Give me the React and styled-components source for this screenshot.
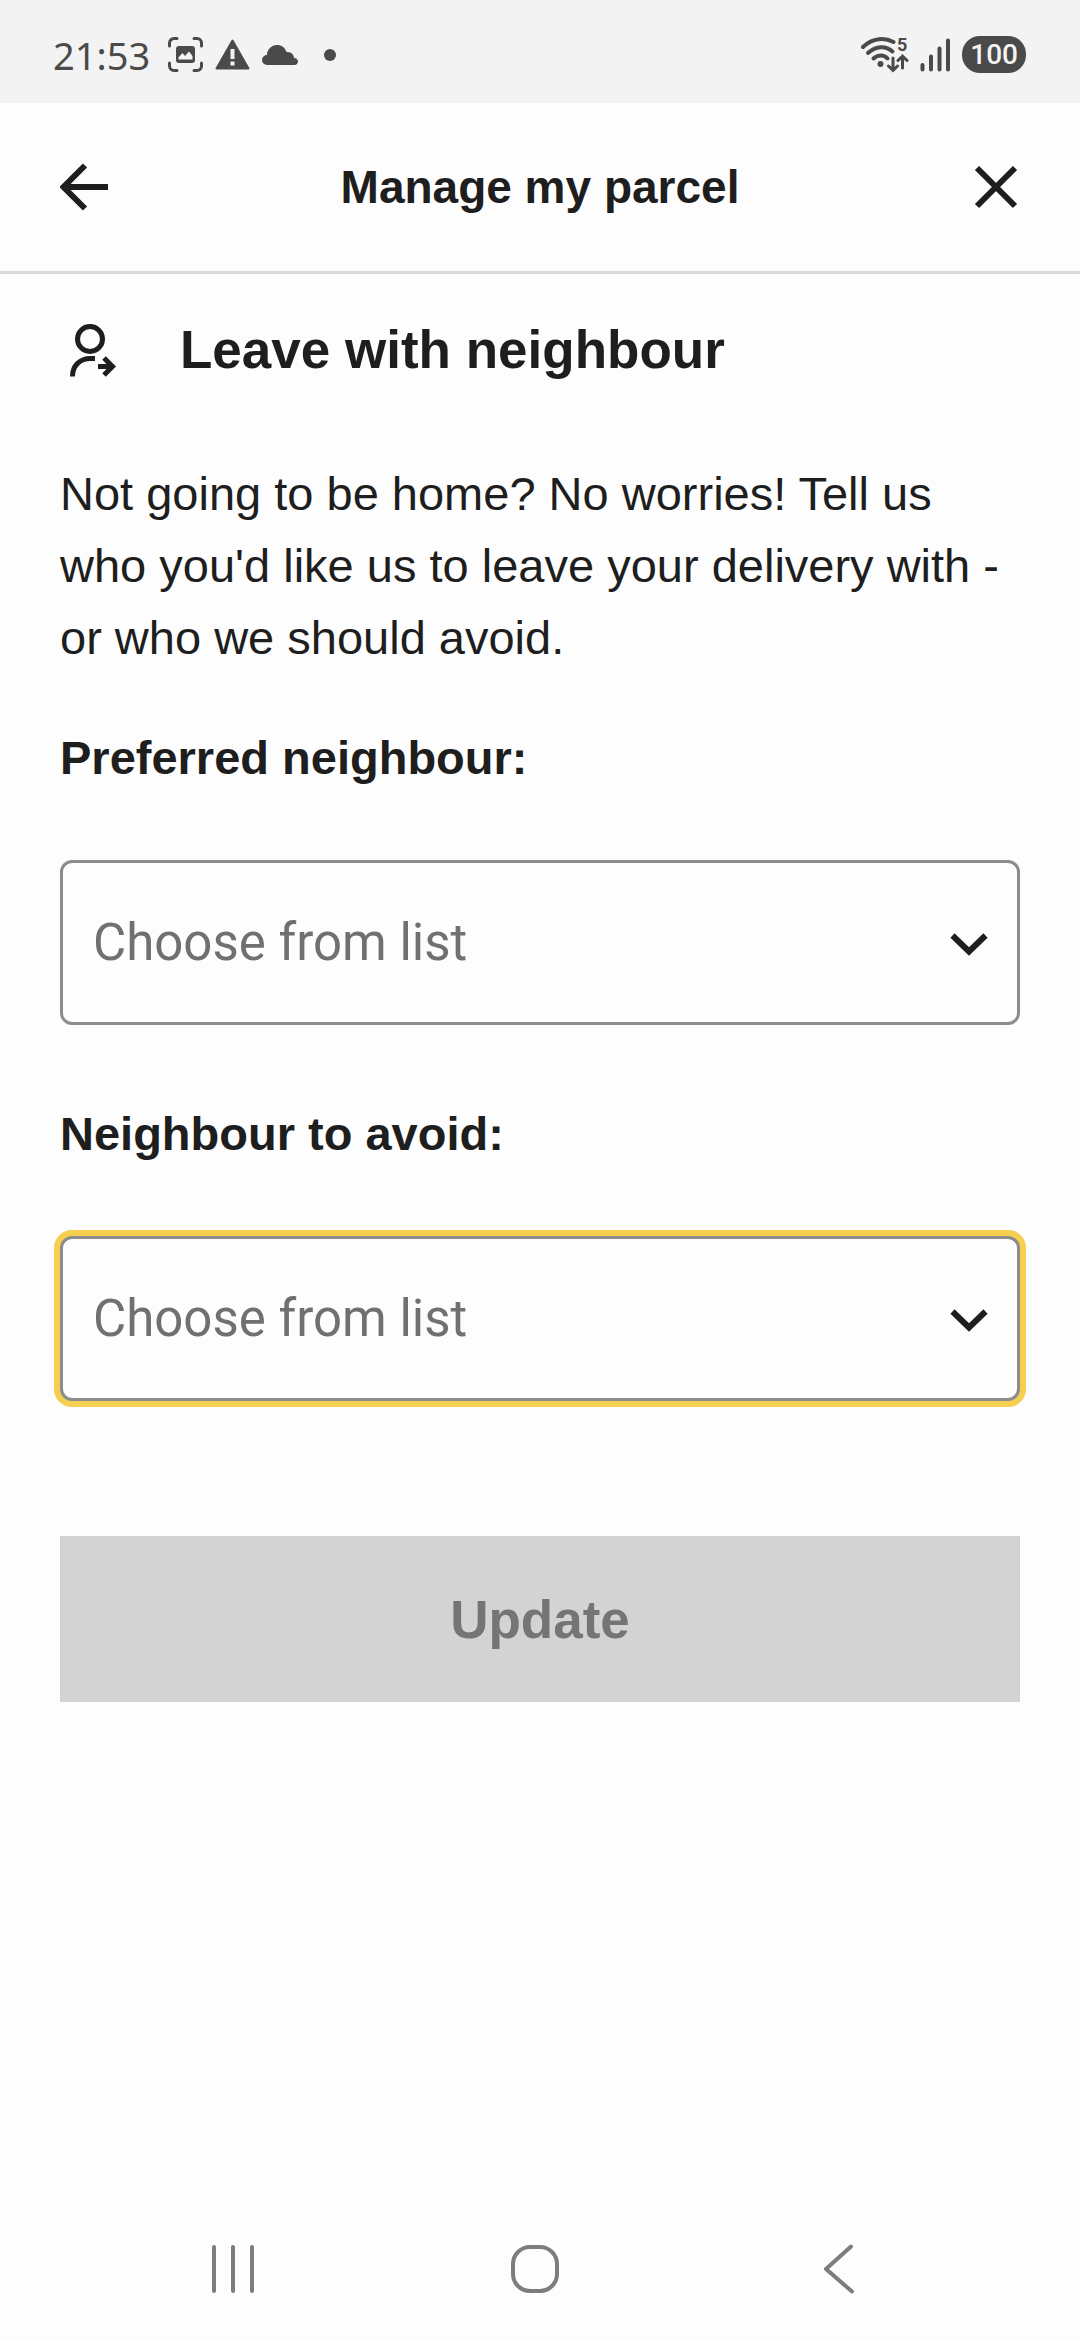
import * as React from "react"
import styled, { createGlobalStyle } from 'styled-components'

const ScreenshotIcon = () => (
  <svg width="35" height="35" viewBox="0 0 35 35" aria-hidden="true">
    <path d="M1.5 9V6a4.500 4.500 0 0 1 4.500-4.500h3M26 1.500h3A4.500 4.500 0 0 1 33.500 6v3M33.500 26v3a4.500 4.500 0 0 1-4.500 4.500h-3M9 33.500H6A4.500 4.500 0 0 1 1.500 29v-3" fill="none" stroke="#4a4a4a" strokeWidth="3" strokeLinecap="round" />
    <rect x="8" y="9" width="19" height="17" rx="3" fill="#4a4a4a" />
    <path d="M10.500 22.500v-2l4-4.500 2.500 3 4-4.500 3.500 4.500v3.500z" fill="#f3f3f3" />
  </svg>
)

const WarningIcon = () => (
  <svg width="35" height="31" viewBox="0 0 35 31" aria-hidden="true">
    <path d="M17.500 1.500 33.500 29.500h-32z" fill="#4a4a4a" stroke="#4a4a4a" strokeWidth="2" strokeLinejoin="round" />
    <path d="M15.500 10h4v10h-4zM15.500 22.500h4v4h-4z" fill="#f3f3f3" />
  </svg>
)

const CloudIcon = () => (
  <svg width="36" height="20" viewBox="0 0 36 20" aria-hidden="true">
    <path d="M5 20A5 5 0 0 1 5 10C5 4.500 9.500 0 15 0c4.500 0 8 2.500 9.500 7 4.500-.5 7.500 2.500 7.500 6 2.300.2 4 1.600 4 3.500S34.500 20 32.500 20z" fill="#4a4a4a" />
  </svg>
)

const WifiIcon = () => (
  <svg width="48" height="48" viewBox="0 -6 48 48" aria-hidden="true">
    <g fill="none" stroke="#4a4a4a" strokeLinecap="round">
      <path d="M2 10C12 .5 24 .5 32.500 5" strokeWidth="4" />
      <path d="M7 16C15 8.500 25 8.500 31.500 14.500" strokeWidth="4" />
      <path d="M12.500 21.500c4.500-4 10.500-4 14 0" strokeWidth="4" />
      <path d="M32 21v12M27.500 29l4.500 4.500 4.500-4.500M41.500 31V19M37 23.500l4.500-4.500 4.500 4.500" strokeWidth="3" />
    </g>
    <circle cx="19.500" cy="27" r="3" fill="#4a4a4a" />
    <text x="36" y="14" fill="#4a4a4a" fontFamily="Roboto, sans-serif" fontWeight="700" fontSize="18">5</text>
  </svg>
)

const SignalIcon = () => (
  <svg width="31" height="34" viewBox="0 0 31 34" aria-hidden="true">
    <path d="M2.500 27v4.500M11 18.500v13M19.500 10.500v21M28 2.500v29" stroke="#4a4a4a" strokeWidth="4" strokeLinecap="round" />
  </svg>
)

const BackIcon = () => (
  <svg width="48" height="48" viewBox="0 0 48 48" aria-hidden="true">
    <path d="M48 24H5M25 2.500 3.500 24 25 45.500" fill="none" stroke="#1e1e1e" strokeWidth="6" />
  </svg>
)

const CloseIcon = () => (
  <svg width="48" height="48" viewBox="0 0 48 48" aria-hidden="true">
    <path d="M5 5l38 38M43 5L5 43" fill="none" stroke="#1e1e1e" strokeWidth="6" />
  </svg>
)

const NeighbourIcon = () => (
  <svg width="48" height="54" viewBox="0 0 48 54" aria-hidden="true">
    <g fill="none" stroke="#1e1e1e" strokeWidth="5">
      <circle cx="20" cy="16" r="12.500" />
      <path d="M2.500 53.500c0-11 7.500-18 18-18H25" />
      <path d="M28 43.500h15M34 35l8.500 8.500-8.500 8.500" />
    </g>
  </svg>
)

const ChevronIcon = () => (
  <svg width="38" height="24" viewBox="0 0 38 24" aria-hidden="true">
    <path d="M2.500 3.500 19 19.500l16.500-16" fill="none" stroke="#1e1e1e" strokeWidth="6" />
  </svg>
)

const RecentsIcon = () => (
  <svg width="50" height="50" viewBox="0 0 50 50" aria-hidden="true">
    <path d="M6 3v44M25 3v44M44 3v44" stroke="#7d7d7d" strokeWidth="4" strokeLinecap="round" />
  </svg>
)

const HomeIcon = () => (
  <svg width="50" height="50" viewBox="0 0 50 50" aria-hidden="true">
    <rect x="3" y="3" width="44" height="44" rx="17" fill="none" stroke="#7d7d7d" strokeWidth="4" />
  </svg>
)

const NavBackIcon = () => (
  <svg width="50" height="50" viewBox="0 0 50 50" aria-hidden="true">
    <path d="M38 2.500 13 25l26 22.500" fill="none" stroke="#7d7d7d" strokeWidth="4" strokeLinecap="round" strokeLinejoin="round" />
  </svg>
)

const NeighbourField = ({id, label, highlighted}) => (
  <StyledField>
    <StyledLabel htmlFor={id}>{label}</StyledLabel>
    <StyledSelectWrap>
      <StyledSelect id={id} $highlighted={highlighted} defaultValue="">
        <option value="">Choose from list</option>
      </StyledSelect>
      <StyledChevron><ChevronIcon /></StyledChevron>
    </StyledSelectWrap>
  </StyledField>
)

const App = () => {
  return (
    <StyledPage>
      <GlobalStyle />
      <StyledStatusBar>
        <StyledStatusGroup $gap="12px">
          <StyledTime>21:53</StyledTime>
          <ScreenshotIcon />
          <WarningIcon />
          <CloudIcon />
          <StyledDot />
        </StyledStatusGroup>
        <StyledStatusGroup $gap="11px">
          <WifiIcon />
          <SignalIcon />
          <StyledBattery>100</StyledBattery>
        </StyledStatusGroup>
      </StyledStatusBar>
      <StyledHeader>
        <StyledIconButton aria-label="Back"><BackIcon /></StyledIconButton>
        <StyledTitle>Manage my parcel</StyledTitle>
        <StyledIconButton aria-label="Close"><CloseIcon /></StyledIconButton>
      </StyledHeader>
      <StyledMain>
        <StyledHeadingRow>
          <NeighbourIcon />
          <StyledHeading>Leave with neighbour</StyledHeading>
        </StyledHeadingRow>
        <StyledIntro>
          Not going to be home? No worries! Tell us who you'd like us to leave your delivery with - or who we should avoid.
        </StyledIntro>
        <StyledForm>
          <NeighbourField id="preferred" label="Preferred neighbour:" />
          <NeighbourField id="avoid" label="Neighbour to avoid:" highlighted />
          <StyledSubmit type="submit" disabled>Update</StyledSubmit>
        </StyledForm>
      </StyledMain>
      <StyledNavBar>
        <StyledNavButton aria-label="Recent apps"><RecentsIcon /></StyledNavButton>
        <StyledNavButton aria-label="Home"><HomeIcon /></StyledNavButton>
        <StyledNavButton aria-label="Back"><NavBackIcon /></StyledNavButton>
      </StyledNavBar>
    </StyledPage>
  )
}

const GlobalStyle = createGlobalStyle`
  * {
    box-sizing: border-box;
  }
  body {
    margin: 0;
    background: #fdfdfd;
    color: #1e1e1e;
    font-family: "Liberation Sans", Arial, sans-serif;
  }
  svg {
    display: block;
    flex-shrink: 0;
  }
`

const StyledPage = styled.div`
  display: flex;
  flex-direction: column;
  min-height: 100vh;
`

const StyledStatusBar = styled.div`
  display: flex;
  align-items: center;
  justify-content: space-between;
  height: 103px;
  padding: 6px 54px 0 53px;
  background: #f3f3f3;
  color: #4a4a4a;
`

const StyledStatusGroup = styled.div`
  display: flex;
  align-items: center;
  gap: ${props => props.$gap};
`

const StyledTime = styled.span`
  margin-right: 6px;
  font-family: "Noto Sans", sans-serif;
  font-size: 38px;
  line-height: 40px;
`

const StyledDot = styled.span`
  width: 12px;
  height: 12px;
  margin-left: 14px;
  border-radius: 50%;
  background: #4a4a4a;
`

const StyledBattery = styled.span`
  padding: 0 8px;
  border-radius: 18px;
  background: #4a4a4a;
  color: #f3f3f3;
  font-family: Roboto, sans-serif;
  font-size: 28px;
  font-weight: 500;
  line-height: 37px;
`

const StyledHeader = styled.header`
  display: flex;
  align-items: center;
  justify-content: space-between;
  height: 171px;
  padding: 0 60px;
  border-bottom: 3px solid #d9d9d9;
`

const StyledIconButton = styled.button`
  padding: 0;
  border: 0;
  background: none;
`

const StyledTitle = styled.h1`
  margin: 0;
  font-size: 46px;
  line-height: 72px;
`

const StyledMain = styled.main`
  flex: 1;
  padding: 40px 60px;
`

const StyledHeadingRow = styled.div`
  display: flex;
  align-items: center;
  gap: 62px;
  padding-left: 10px;
`

const StyledHeading = styled.h2`
  margin: 0;
  font-size: 53px;
  line-height: 72px;
`

const StyledIntro = styled.p`
  margin: 72px 0 48px;
  font-size: 47px;
  line-height: 72px;
`

const StyledForm = styled.form`
  display: flex;
  flex-direction: column;
  gap: 73px;
`

const StyledField = styled.div`
  display: flex;
  flex-direction: column;
  gap: 66px;
`

const StyledLabel = styled.label`
  font-size: 47px;
  font-weight: 700;
  line-height: 72px;
`

const StyledSelectWrap = styled.div`
  position: relative;
`

const StyledSelect = styled.select`
  display: block;
  appearance: none;
  width: 100%;
  height: 165px;
  padding: 0 100px 0 30px;
  border: 3px solid #8c8c8c;
  border-radius: 12px;
  outline: none;
  background: #fdfdfd;
  box-shadow: ${props => props.$highlighted ? "0 0 0 6px #f6cf50" : "none"};
  color: #707070;
  font-family: Roboto, sans-serif;
  font-size: 51px;
`

const StyledChevron = styled.span`
  position: absolute;
  top: 72px;
  right: 32px;
  pointer-events: none;
`

const StyledSubmit = styled.button`
  height: 166px;
  margin-top: 62px;
  border: 0;
  background: #d3d3d3;
  color: #757575;
  font-family: inherit;
  font-size: 53px;
  font-weight: 700;
`

const StyledNavBar = styled.nav`
  display: flex;
  height: 142px;
  padding: 0 91px 0 82px;
`

const StyledNavButton = styled.button`
  display: flex;
  flex: 1;
  align-items: center;
  justify-content: center;
  padding: 0;
  border: 0;
  background: none;
`

export default App
